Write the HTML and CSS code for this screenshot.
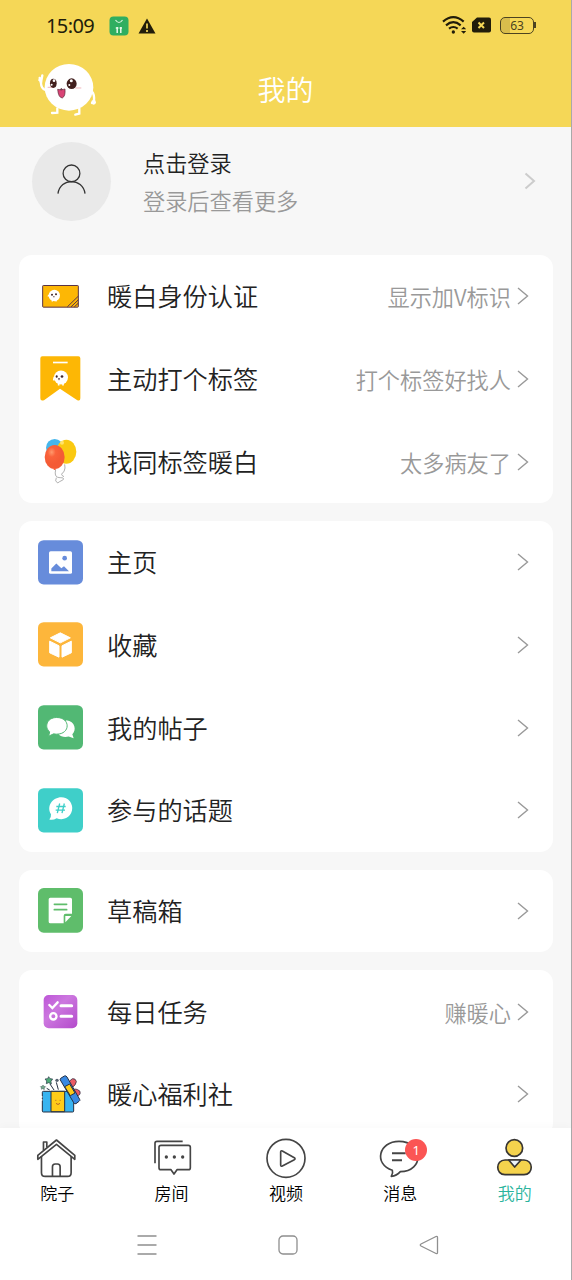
FILE: index.html
```html
<!DOCTYPE html>
<html lang="zh-CN">
<head>
<meta charset="utf-8">
<title>我的</title>
<link rel="stylesheet" href="styles.css">
</head>
<body>
<div class="screen">
  <header class="header">
    <div class="status">
      <span class="time">15:09</span>
      <svg class="app-icon" viewBox="0 0 20 20"><rect x=".5" y=".5" width="19" height="19" rx="4" fill="#2fae60"/><path d="M6.5 4q3.500 5 7 0" fill="none" stroke="#d5f3dc" stroke-width="1.2"/><path d="M8.2 11v6M11.8 11v6M6.8 12h2.600M10.6 12H13" stroke="#e6f9e9" stroke-width="1.5"/></svg>
      <svg class="warn-icon" viewBox="0 0 18 16"><path d="M9 .5 17.5 15.5H.5Z" fill="#211c0a"/><path d="M9 5.5v5M9 12v2" stroke="#f5d757" stroke-width="1.7"/></svg>
      <svg class="wifi-icon" viewBox="0 0 72 60"><g fill="none" stroke="#211c0a" stroke-width="6.500"><path d="M3 20q31-27 62 0"/><path d="M12 31q22-19 44 0"/><path d="M21 41q13-10 26 0"/></g><circle cx="34" cy="51" r="5" fill="#211c0a"/><path d="M57 43l8-8 8 8ZM57 48h16l-8 8Z" fill="#211c0a"/></svg>
      <svg class="sim-icon" viewBox="0 0 19 16"><path d="M5 .5h12q2 0 2 2v11q0 2-2 2H2q-2 0-2-2V5Z" fill="#211c0a"/><path d="m6.500 5.500 5.500 5.500m0-5.500L6.500 11" stroke="#f5d757" stroke-width="2"/></svg>
      <div class="battery">63</div>
    </div>
    <div class="titlebar">
      <svg class="mascot" viewBox="105 180 190 175">
        <g fill="none" stroke="#fff" stroke-linecap="round" stroke-width="7"><path d="M136 270q-12-4-13-20l-4-16M123 248l4-22M118 240l6 6M276 275q8 8 6 28l-6 6M172 325v13l-16 1M238 325v16l-12 3"/></g>
        <circle cx="281" cy="307" r="7" fill="#fff"/>
        <ellipse cx="207" cy="262" rx="73" ry="70" fill="#fff"/>
        <g stroke="#f0b6bd" stroke-width="3"><path d="M143 262h18M226 264h18"/></g>
        <ellipse cx="160" cy="250" rx="10" ry="14" fill="#42201e"/><ellipse cx="215" cy="251" rx="15" ry="16" fill="#42201e"/>
        <g fill="#fff"><circle cx="162" cy="242" r="4"/><circle cx="155" cy="254" r="3"/><circle cx="214" cy="242" r="4.500"/><circle cx="208" cy="255" r="3"/></g>
        <path d="M173 268q11 4 22-1 2 22-8 27-12-1-14-26Z" fill="#d94476" stroke="#552330" stroke-width="2"/><path d="m179 269 5-5 5 5" fill="#552330"/>
      </svg>
      <h1>我的</h1>
    </div>
  </header>

  <main class="content">
    <section class="profile">
      <div class="avatar"><svg viewBox="0 0 90 96"><g fill="none" stroke="#333" stroke-width="4"><circle cx="45" cy="29" r="26"/><path d="M3 92C10 42 80 42 87 92"/></g></svg></div>
      <div class="profile-text"><div class="name">点击登录</div><div class="sub">登录后查看更多</div></div>
      <svg class="chevron chevron-light" viewBox="0 0 12 18"><path d="m1.500 1.500 8.500 7.500-8.500 7.500"/></svg>
    </section>

    <section class="card">
      <div class="row">
        <svg class="icon" viewBox="54 71.500 135 135"><rect x="68" y="106" width="107" height="65" rx="2" fill="#fdb705" stroke="#583348" stroke-width="3"/><circle cx="103" cy="136" r="17" fill="#fff"/><path d="M97 148v6M108 148v6M87 134l-3 5" stroke="#fff" stroke-width="4"/><g fill="#40272c"><circle cx="96" cy="134" r="3"/><circle cx="108" cy="132" r="3"/><path d="m99 138h5l-2 5Z"/></g><path d="m142 170 33-32M153 170l22-21M163 170l12-11" stroke="#583348" stroke-width="3"/></svg>
        <span class="label">暖白身份认证</span><span class="hint">显示加V标识</span><svg class="chevron" viewBox="0 0 12 18"><path d="m1 1 9.500 8L1 17"/></svg>
      </div>
      <div class="row">
        <svg class="icon" viewBox="54 319.500 135 135"><path d="M67 320h108q6 0 6 6v120q0 10-9 6l-52-34-48 34q-11 4-11-6V326q0-6 6-6Z" fill="#fdb705"/><path d="M99 339h44" stroke="#fff" stroke-width="5"/><circle cx="123" cy="384" r="21" fill="#fff"/><path d="m103 382-2 11M116 400v8M129 400v8" stroke="#fff" stroke-width="5"/><g fill="#40272c"><ellipse cx="110" cy="381" rx="3" ry="4"/><circle cx="126" cy="381" r="4"/><path d="m114 386h6l-3 7Z"/></g></svg>
        <span class="label">主动打个标签</span><span class="hint">打个标签好找人</span><svg class="chevron" viewBox="0 0 12 18"><path d="m1 1 9.500 8L1 17"/></svg>
      </div>
      <div class="row">
        <svg class="icon" viewBox="54 567 135 135"><defs><radialGradient id="ball" cx=".35" cy=".3"><stop stop-color="#ff9a6d"/><stop offset=".4" stop-color="#fa633b"/><stop offset="1" stop-color="#f45b35"/></radialGradient></defs><circle cx="104" cy="593" r="26" fill="#45b6ec"/><ellipse cx="139" cy="605" rx="30" ry="36" fill="#fac911"/><ellipse cx="104" cy="621" rx="30" ry="36" fill="url(#ball)"/><path d="m100 660 4-5 4 5Z" fill="#fa633b"/><path d="M107 659c-7 30 15 22 22 25 7 6-9 8-16 15M134 643q3 11-2 22-14 9 0 15M113 699q-10-5-4-16" fill="none" stroke="#888" stroke-width="2"/><circle cx="126" cy="578" r="6" fill="#ffe36b"/></svg>
        <span class="label">找同标签暖白</span><span class="hint">太多病友了</span><svg class="chevron" viewBox="0 0 12 18"><path d="m1 1 9.500 8L1 17"/></svg>
      </div>
    </section>

    <section class="card">
      <div class="row">
        <svg class="icon" viewBox="54 29.500 135 135"><rect x="54" y="30" width="135" height="133" rx="17" fill="#678cdb"/><rect x="87" y="63" width="69" height="68" rx="5" fill="#fff"/><circle cx="134" cy="84" r="7" fill="#678cdb"/><path d="M94 123V115l15-15 15 14 8-6 15 15Z" fill="#678cdb"/></svg>
        <span class="label">主页</span><svg class="chevron" viewBox="0 0 12 18"><path d="m1 1 9.500 8L1 17"/></svg>
      </div>
      <div class="row">
        <svg class="icon" viewBox="54 277.500 135 135"><rect x="54" y="278" width="135" height="133" rx="17" fill="#fdb63b"/><g fill="#fff" stroke="#fff" stroke-width="3" stroke-linejoin="round"><path d="m121 310 30 15-30 15-30-15Z"/><path d="m89 335 28 14v34l-28-13ZM154 335l-28 14v34l28-13Z"/></g></svg>
        <span class="label">收藏</span><svg class="chevron" viewBox="0 0 12 18"><path d="m1 1 9.500 8L1 17"/></svg>
      </div>
      <div class="row">
        <svg class="icon" viewBox="54 45.500 135 135"><rect x="54" y="46" width="135" height="133" rx="17" fill="#52b874"/><path d="M139 91c27 2 31 31 18 42l4 12-15-5c-13 3-24 0-30-7Z" fill="#fff"/><path d="M110 83c42 0 42 50 0 50q-5 0-9-1l-15 7 3-13C72 112 80 83 110 83Z" fill="#fff" stroke="#52b874" stroke-width="3"/></svg>
        <span class="label">我的帖子</span><svg class="chevron" viewBox="0 0 12 18"><path d="m1 1 9.500 8L1 17"/></svg>
      </div>
      <div class="row">
        <svg class="icon" viewBox="54 293.500 135 135"><rect x="54" y="294" width="135" height="133" rx="17" fill="#3fcfc9"/><path d="M124 321a33 33 0 1 1-14 63q-11 7-22 4 6-7 5-16C78 348 98 321 124 321Z" fill="#fff"/><path d="m119 340-7 29M133 340l-7 29M109 349h28M107 360h28" stroke="#3fcfc9" stroke-width="4"/></svg>
        <span class="label">参与的话题</span><svg class="chevron" viewBox="0 0 12 18"><path d="m1 1 9.500 8L1 17"/></svg>
      </div>
    </section>

    <section class="card">
      <div class="row">
        <svg class="icon" viewBox="54 55 135 135"><rect x="54" y="55" width="135" height="134" rx="17" fill="#5fbd6b"/><path d="M91 84h60q5 0 5 5v43h-19q-6 0-6 6v23H91q-5 0-5-5V89q0-5 5-5Z" fill="#fff"/><path d="M136 139h18l-18 19Z" fill="#fff"/><path d="M103 104h37M103 120h37" stroke="#5fbd6b" stroke-width="5" stroke-linecap="round"/></svg>
        <span class="label">草稿箱</span><svg class="chevron" viewBox="0 0 12 18"><path d="m1 1 9.500 8L1 17"/></svg>
      </div>
    </section>

    <section class="card">
      <div class="row">
        <svg class="icon" viewBox="54 357 135 135"><defs><linearGradient id="task" x2="1" y2="1"><stop stop-color="#bd56d7"/><stop offset=".4" stop-color="#cc77df"/><stop offset="1" stop-color="#b34acb"/></linearGradient></defs><rect x="71" y="375" width="101" height="100" rx="15" fill="url(#task)"/><g fill="none" stroke="#fff" stroke-linecap="round" stroke-width="7"><path d="m88 405 9 9 16-17"/><path stroke-width="9" d="M123 407h32M123 439h32"/><circle cx="100" cy="439" r="9.500"/></g></svg>
        <span class="label">每日任务</span><span class="hint">赚暖心</span><svg class="chevron" viewBox="0 0 12 18"><path d="m1 1 9.500 8L1 17"/></svg>
      </div>
      <div class="row">
        <svg class="icon" viewBox="54 605 135 135"><g stroke="#263044" stroke-width="3"><rect x="67" y="663" width="94" height="62" rx="3" fill="#38b4f0"/><path d="M93 663h41v61H93Z" fill="#ffcc18"/><g fill="#ea5b65" stroke-width="2"><ellipse cx="157" cy="638" rx="10" ry="14" transform="rotate(35 157 638)"/><ellipse cx="169" cy="666" rx="9" ry="12" transform="rotate(-70 169 666)"/></g><path d="m122 624 11-7q5-2 8 3l38 67q2 4-2 6l-9 7q-4 2-7-3l-40-68q-2-3 1-5Z" fill="#3989e2"/><path d="m134 649 15-8 16 27-14 8Z" fill="#ffcc18"/><path d="m90 641 12 18M109 636l6 22M80 654l9 5" fill="none"/></g><path d="m86 619 4 6 8 1-5 7 1 8-8-4-7 3 1-8-5-6 8-1Z" fill="#4eaa78" stroke="#263044" stroke-width="2"/><circle cx="111" cy="630" r="5" fill="#566170"/><path d="m69 644 3 4 5 1-4 4v5l-5-3-4 2v-5l-3-3 5-1Z" fill="#72a889" stroke="#263044"/><path d="M106 690h3M119 690h3M108 699q6 7 12 0" stroke="#b76625" stroke-width="3" fill="none"/><path d="M65 677v18" stroke="#fff" stroke-width="4" stroke-dasharray="5 4"/></svg>
        <span class="label">暖心福利社</span><svg class="chevron" viewBox="0 0 12 18"><path d="m1 1 9.500 8L1 17"/></svg>
      </div>
    </section>
  </main>

  <footer class="footer">
    <nav class="tabs">
      <div class="tab"><svg viewBox="105.600 48 132 132"><g fill="none" stroke="#454545" stroke-width="5" stroke-linejoin="round"><path d="M125 108v50q0 11 11 11h67q11 0 11-11v-50"/><path d="M114 106v12l56-45 55 45v-12L170 60Z"/><path d="M131 90V66h10v16M158 168v-28q0-8 8-8h7q8 0 8 8v28"/></g></svg><span>院子</span></div>
      <div class="tab"><svg viewBox="449 48 132 132"><g fill="none" stroke="#454545" stroke-width="5" stroke-linejoin="round"><path d="M464 130V70q0-6 6-6h77"/><path d="M482 76h82q6 0 6 6v61q0 6-6 6h-34l-9 13-9-13h-30q-6 0-6-6V82q0-6 6-6Z"/></g><g fill="#454545"><circle cx="498" cy="111" r="5"/><circle cx="522" cy="111" r="5"/><circle cx="547" cy="111" r="5"/></g></svg><span>房间</span></div>
      <div class="tab"><svg viewBox="792 48 132 132"><g fill="none" stroke="#454545" stroke-width="5" stroke-linejoin="round"><circle cx="858" cy="115" r="57"/><path d="M842 96q0-5 5-3l36 20q4 3 0 6l-36 19q-5 2-5-3Z"/></g></svg><span>视频</span></div>
      <div class="tab"><svg viewBox="289 48 132 132"><g fill="none" stroke="#454545" stroke-width="5" stroke-linejoin="round"><path d="M352 64c74 0 76 91 4 91-7 8-16 13-27 14 4-6 5-12 3-18-57-19-41-87 20-87Z"/><path stroke-width="6" d="M331 100h41M331 121h30"/></g></svg><b class="badge">1</b><span>消息</span></div>
      <div class="tab active"><svg viewBox="632 48 132 132"><g fill="#f5d34d" stroke="#373533" stroke-width="5" stroke-linejoin="round"><circle cx="696" cy="84" r="25"/><path d="M668 120h57c29 0 29 44 0 44h-57c-29 0-29-44 0-44Z"/><path d="m679 120 18 21 19-21Z" fill="#edf6fc"/></g></svg><span>我的</span></div>
    </nav>
    <div class="system-nav">
      <svg viewBox="0 0 20 20"><path d="M.5 1h19M.5 10h19M.5 19h19"/></svg>
      <svg viewBox="0 0 20 20"><rect x="1" y="1" width="18" height="18" rx="4"/></svg>
      <svg viewBox="0 0 20 20"><path d="M17 1.500 2 9q-1.500 1 0 2l15 7.500q1.500.5 1.500-1V2.500q0-1.500-1.500-1Z"/></svg>
    </div>
  </footer>
</div>
</body>
</html>
```
FILE: styles.css
```css
* { box-sizing: border-box; }
body {
  margin: 0;
  font-family: "Noto Sans CJK SC", sans-serif;
  font-weight: 350;
  color: #222;
}
.screen {
  width: 572px;
  height: 1280px;
  display: flex;
  flex-direction: column;
  overflow: hidden;
  background: #f7f7f7;
  border-right: 1px solid #a9a9a9;
}
.header { flex: none; height: 127px; background: #f5d757; }
.status { display: flex; align-items: center; height: 51px; padding: 0 37px 0 46px; }
.time { width: 48px; font: 400 20px/24px "Noto Sans", sans-serif; letter-spacing: -.6px; white-space: nowrap; color: #211c0a; }
.app-icon { width: 20px; height: 20px; margin-left: 15px; }
.warn-icon { width: 18px; height: 16px; margin-left: 9px; }
.wifi-icon { width: 24px; height: 20px; margin-left: auto; margin-bottom: 2px; }
.sim-icon { width: 19px; height: 16px; margin-left: 6px; margin-bottom: 1px; }
.battery {
  position: relative;
  width: 34px;
  height: 17px;
  margin-left: 9px;
  border: 1.5px solid #4c4320;
  border-radius: 5px;
  background: linear-gradient(90deg, #d9bd4c 9px, transparent 9px);
  font: 400 12px/16px "Noto Sans", sans-serif;
  text-align: center;
  color: #4c4320;
}
.battery::after { content: ""; position: absolute; right: -3px; top: 4px; width: 2px; height: 6px; background: #4c4320; }
.titlebar { display: grid; grid-template-columns: 1fr auto 1fr; align-items: center; height: 76px; padding-left: 35px; padding-right: 35px; }
.mascot { width: 63.300px; height: 58.300px; margin-top: 1px; }
.titlebar h1 { margin: 0; font-size: 28px; line-height: 40px; font-weight: 350; color: #fff; }
.content { flex: 1; min-height: 0; overflow: hidden; padding: 0 18px 0 19px; }
.profile { display: flex; align-items: center; height: 108px; margin: 0 17px 20px 13px; }
.avatar { display: flex; align-items: center; justify-content: center; width: 79px; height: 79px; padding-bottom: 3px; border-radius: 50%; background: #e9e9e9; }
.avatar svg { width: 29px; height: 31px; }
.profile-text { flex: 1; margin-left: 32px; font-size: 22.200px; line-height: 38px; }
.sub { color: #999; }
.card { margin-bottom: 18px; border-radius: 13px; background: #fff; }
.row { display: flex; align-items: center; height: 82.670px; padding: 0 24px 0 19px; }
.icon { flex: none; width: 45px; height: 45px; }
.label { flex: 1; margin-left: 24px; padding-bottom: 2px; font-size: 25.200px; line-height: 36px; white-space: nowrap; }
.hint { margin-right: 6px; font-size: 22.200px; line-height: 32px; white-space: nowrap; color: #999; }
.chevron { flex: none; width: 12px; height: 18px; fill: none; stroke: #999; stroke-width: 1.4; }
.chevron-light { stroke: #ccc; stroke-width: 2; }
.footer { position: relative; flex: none; height: 152px; background: #fff; box-shadow: 0 -2px 8px rgba(0, 0, 0, .025); }
.tabs { display: grid; grid-template-columns: repeat(5, 114.400px); height: 84px; padding-top: 8px; }
.tab { position: relative; display: flex; flex-direction: column; align-items: center; font-size: 17px; line-height: 24px; color: #000; }
.tab svg { width: 44px; height: 44px; margin-bottom: 1px; }
.tab.active { color: #2bb49d; }
.badge { position: absolute; left: 62px; top: 3px; width: 22px; height: 22px; border-radius: 50%; background: #fb5554; color: #fff; font: 400 13px/22px "Noto Sans", sans-serif; text-align: center; }
.system-nav { display: flex; gap: 121px; height: 66px; align-items: center; padding-left: 137px; }
.system-nav svg { width: 20px; height: 20px; fill: none; stroke: #8f8f8f; stroke-width: 1.3; }
```
